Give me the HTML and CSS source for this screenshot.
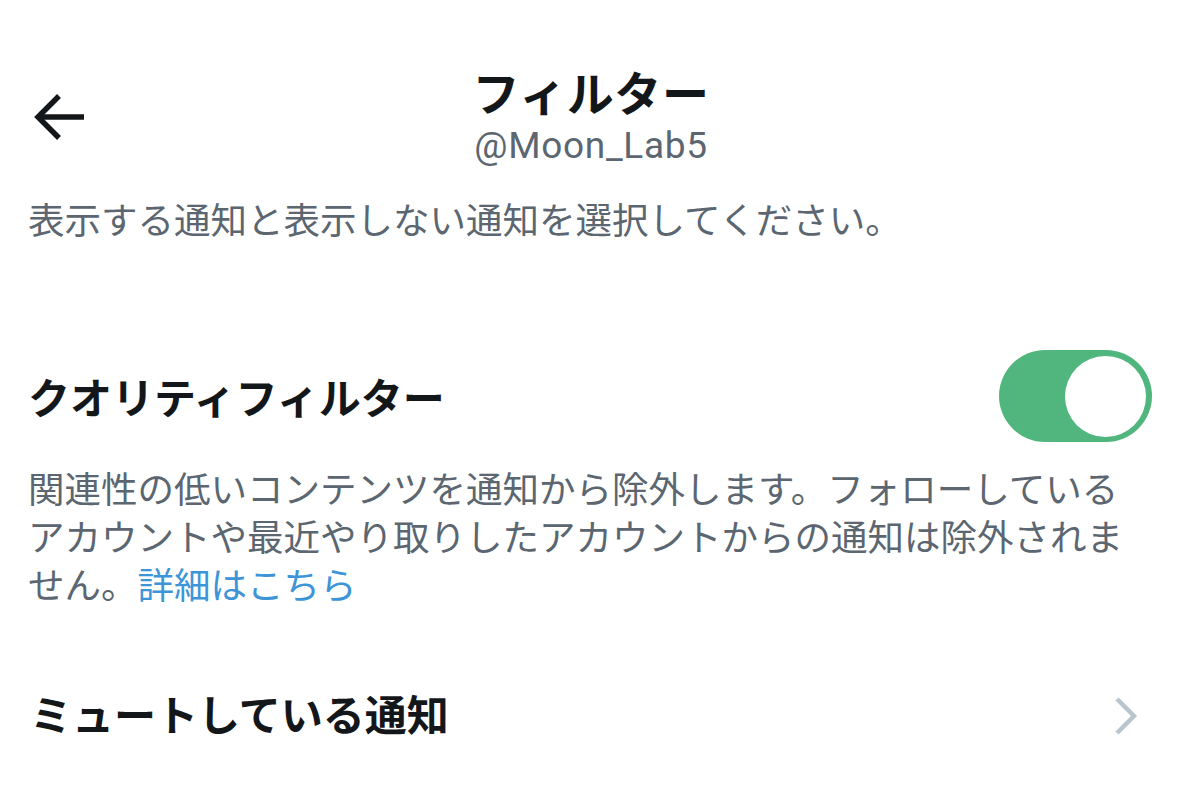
FILE: index.html
```html
<!DOCTYPE html>
<html lang="ja">
<head>
<meta charset="utf-8">
<link rel="stylesheet" href="styles.css">
</head>
<body>
<div class="page">
  <header class="topbar">
    <div class="back">
      <svg width="52" height="46" viewBox="0 0 52 46" fill="none" stroke="#14171a" stroke-width="5.5" stroke-linecap="butt" stroke-linejoin="miter">
        <path d="M50 23 H5"/>
        <path d="M25 2 L4 23 L25 44"/>
      </svg>
    </div>
    <div class="titles">
      <div class="title">フィルター</div>
      <div class="handle">@Moon_Lab5</div>
    </div>
    <div></div>
  </header>
  <p class="intro">表示する通知と表示しない通知を選択してください。</p>

  <section class="setting">
    <div class="row">
      <div class="label">クオリティフィルター</div>
      <div class="toggle"><div class="knob"></div></div>
    </div>
    <p class="desc">関連性の低いコンテンツを通知から除外します。フォローしているアカウントや最近やり取りしたアカウントからの通知は除外されません。<span class="link">詳細はこちら</span></p>
  </section>

  <section class="row muted">
    <div class="label">ミュートしている通知</div>
    <svg class="chev" width="24" height="38" viewBox="0 0 24 38" fill="none" stroke="#bac6cd" stroke-width="4.5">
      <path d="M3 2 L20 19 L3 36"/>
    </svg>
  </section>
</div>
</body>
</html>
```

FILE: styles.css
```css
html, body {
  margin: 0;
  padding: 0;
  background: #ffffff;
}
body {
  font-family: "Noto Sans CJK JP", "Noto Sans", sans-serif;
  color: #14171a;
}
.page {
  width: 1179px;
  height: 806px;
  overflow: hidden;
  box-sizing: border-box;
  padding: 0 27px 0 28px;
}
.topbar {
  display: grid;
  grid-template-columns: 1fr auto 1fr;
  align-items: center;
  padding-top: 61px;
}
.back {
  display: flex;
  align-items: center;
  padding-left: 6px;
  margin-top: 4px;
}
.back svg { display: block; }
.titles {
  display: flex;
  flex-direction: column;
  align-items: center;
  transform: translateX(1px);
}
.title {
  font-size: 47px;
  font-weight: 700;
  line-height: 60px;
  letter-spacing: 0.6px;
}
.handle {
  font-family: Roboto, "Liberation Sans", sans-serif;
  font-size: 37px;
  line-height: 44px;
  margin-top: 3px;
  color: #5b6670;
  letter-spacing: 0.7px;
}
.intro {
  margin: 27px 0 0 0;
  font-size: 36.5px;
  line-height: 48px;
  color: #5b6670;
  white-space: nowrap;
}
.setting {
  margin-top: 107px;
}
.row {
  display: flex;
  align-items: center;
  justify-content: space-between;
}
.label {
  font-size: 42px;
  font-weight: 700;
  line-height: 52px;
}
.toggle {
  width: 153px;
  height: 92px;
  border-radius: 46px;
  background: #50b67e;
  display: flex;
  align-items: center;
  justify-content: flex-end;
  padding-right: 6px;
  box-sizing: border-box;
}
.knob {
  width: 81px;
  height: 81px;
  border-radius: 50%;
  background: #ffffff;
}
.desc {
  margin: 22px 0 0 0;
  width: 1110px;
  font-size: 36.5px;
  line-height: 48px;
  color: #5b6670;
}
.link {
  color: #3d95d8;
}
.muted {
  margin-top: 79px;
  padding-right: 14px;
}
.muted .label {
  padding-left: 2px;
}
.chev { display: block; margin-top: 5px; }
```
